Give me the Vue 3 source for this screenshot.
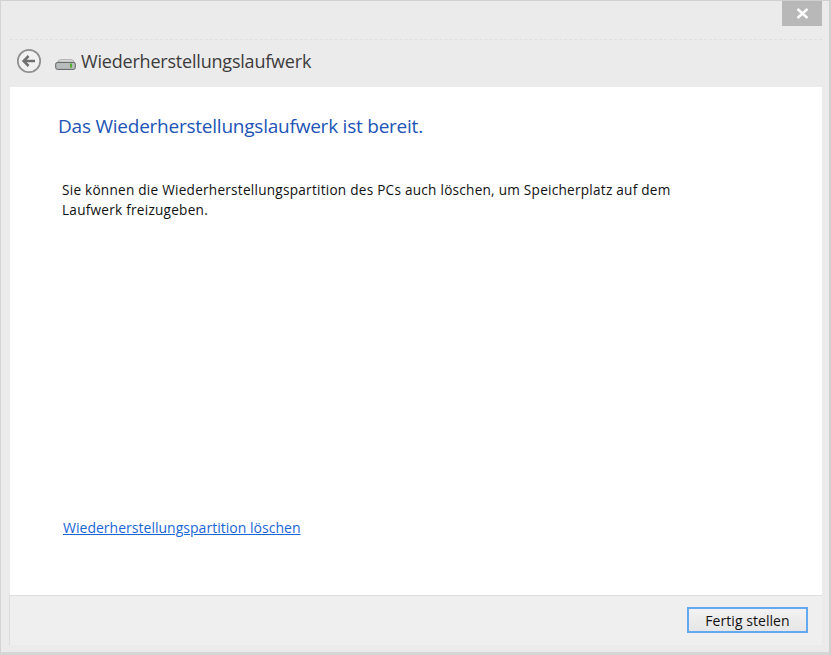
<script setup>
const title = 'Wiederherstellungslaufwerk'
</script>

<template>
  <div class="window">
    <div class="titlebar">
      <button class="close" aria-label="Schließen">
        <svg width="13" height="11" viewBox="0 0 13 11"><path d="M1.5 1 L11.5 10 M11.5 1 L1.5 10" stroke="#fff" stroke-width="2.4" fill="none"/></svg>
      </button>
    </div>
    <div class="client">
      <div class="nav">
        <svg class="back" width="26" height="26" viewBox="0 0 26 26">
          <circle cx="13" cy="13" r="11.2" fill="#f1f1f1" stroke="#8f8f8f" stroke-width="1.7"/>
          <path d="M19 13 H8 M12.6 8 L7.6 13 L12.6 18" stroke="#707070" stroke-width="2.5" fill="none"/>
        </svg>
        <svg class="drive" width="21" height="11" viewBox="0 0 21 11">
          <path d="M2.5 4 Q3 0.5 6 0.5 H16 Q19 0.5 19.5 4 Z" fill="#d6d6d6" stroke="#9a9a9a" stroke-width="0.6"/>
          <rect x="0.7" y="3.4" width="19.6" height="7" rx="1.8" fill="#b9bcbc" stroke="#5f6262" stroke-width="1"/>
          <rect x="15" y="4.6" width="2" height="4" fill="#4fb02a"/>
        </svg>
        <span class="nav-title">{{ title }}</span>
      </div>
      <main class="content">
        <h1 class="heading">Das Wiederherstellungslaufwerk ist bereit.</h1>
        <p class="text">Sie können die Wiederherstellungspartition des PCs auch löschen, um Speicherplatz auf dem<br>Laufwerk freizugeben.</p>
        <a class="link" href="#">Wiederherstellungspartition löschen</a>
      </main>
      <footer class="footer">
        <button class="finish">Fertig stellen</button>
      </footer>
    </div>
  </div>
</template>

<style>
html, body { margin: 0; background: #ebebeb; }
</style>

<style scoped>
.window {
  box-sizing: border-box;
  width: 831px;
  height: 655px;
  display: flex;
  flex-direction: column;
  background: #ebebeb;
  border-top: 1px solid #d0d0d0;
  border-left: 1px solid #d4d4d4;
  border-right: 2px solid #d0d0d0;
  border-bottom: 3px solid #d6d6d6;
  font-family: "Open Sans", "Noto Sans", sans-serif;
  overflow: hidden;
}
.titlebar {
  height: 38px;
  display: flex;
  justify-content: flex-end;
  align-items: flex-start;
  padding-right: 7px;
  flex: none;
}
.close {
  width: 40px;
  height: 25px;
  padding: 0;
  border: 0;
  background: #b8b8b8;
  display: flex;
  align-items: center;
  justify-content: center;
}
.client {
  flex: 1;
  margin: 0 7px 7px 9px;
  display: flex;
  flex-direction: column;
  min-height: 0;
  border-top: 1px dashed #e0e0e0;
}
.nav {
  box-sizing: border-box;
  height: 47px;
  display: flex;
  align-items: center;
  padding: 0 0 5px 6px;
  flex: none;
}
.back { flex: none; }
.drive { flex: none; margin: 6px 0 0 13px; }
.nav-title {
  margin-left: 5px;
  font-size: 18px;
  letter-spacing: -0.2px;
  color: #3c3c3c;
}
.content {
  flex: 1;
  background: #fff;
  display: flex;
  flex-direction: column;
  min-height: 0;
  padding-left: 48px;
}
.heading {
  margin: 26px 0 0;
  font-size: 19px;
  line-height: 26px;
  font-weight: 400;
  letter-spacing: -0.23px;
  color: #2054b6;
}
.text {
  margin: 41px 0 0 4px;
  font-size: 13.6px;
  line-height: 20px;
  letter-spacing: 0.25px;
  color: #111;
}
.link {
  margin: auto 0 57px 5px;
  font-size: 14px;
  line-height: 20px;
  letter-spacing: 0.02px;
  color: #1a66d6;
  text-decoration: underline;
}
.footer {
  height: 50px;
  flex: none;
  box-sizing: border-box;
  background: #efefef;
  border-top: 1px solid #dedede;
  box-shadow: -1px 0 0 #dcdcdc;
  display: flex;
  justify-content: flex-end;
  align-items: flex-start;
  padding: 11px 14px 0 0;
}
.finish {
  box-sizing: border-box;
  width: 121px;
  height: 26px;
  padding: 1px 0 0;
  border: 2px solid #64a8f0;
  background: linear-gradient(#f2f2f2, #e6e6e6);
  font-family: inherit;
  font-size: 14px;
  line-height: 20px;
  letter-spacing: 0.05px;
  color: #111;
}
</style>
